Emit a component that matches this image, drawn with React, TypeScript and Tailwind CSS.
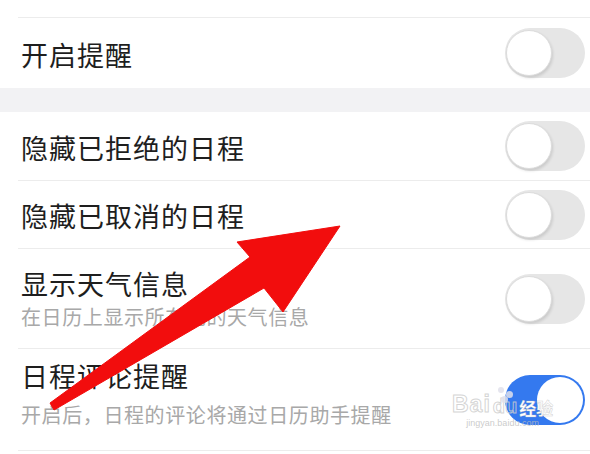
import React from "react";

const font = { fontFamily: '"Noto Sans CJK SC", "Noto Sans", sans-serif' };

function Toggle({ on = false }: { on?: boolean }) {
  if (on) {
    return (
      <div className="relative w-[80px] h-[50px] rounded-full bg-[#3479ef] shrink-0">
        <div className="absolute right-[2px] top-[2px] w-[46px] h-[46px] rounded-full bg-white" />
      </div>
    );
  }
  return (
    <div className="relative w-[80px] h-[50px] rounded-full bg-[#e6e6e6] shrink-0">
      <div className="absolute left-[1px] top-[2px] w-[46px] h-[46px] rounded-full bg-white border border-[#dcdcdc] shadow-[1px_2px_3px_rgba(0,0,0,0.12)]" />
    </div>
  );
}

function Divider() {
  return <div className="h-px bg-[#ececec] ml-[18px]" />;
}

export default function App() {
  return (
    <div className="relative w-[590px] h-[454px] bg-white overflow-hidden" style={font}>
      <div className="h-[17px]" />
      <Divider />
      <div className="h-[70px] flex items-center justify-between pl-[21px] pr-[5px]">
        <span className="text-[27px] leading-[36px] tracking-[1px] text-[#1e1e1e] pt-[3px]">开启提醒</span>
        <Toggle />
      </div>
      <div className="h-[24px] bg-[#f2f2f4]" />
      <div className="h-[68px] flex items-center justify-between pl-[21px] pr-[5px]">
        <span className="text-[27px] leading-[36px] tracking-[1px] text-[#1e1e1e] pt-[3px]">隐藏已拒绝的日程</span>
        <Toggle />
      </div>
      <Divider />
      <div className="h-[67px] flex items-center justify-between pl-[21px] pr-[5px]">
        <span className="text-[27px] leading-[36px] tracking-[1px] text-[#1e1e1e] pt-[3px]">隐藏已取消的日程</span>
        <Toggle />
      </div>
      <Divider />
      <div className="h-[99px] flex items-center justify-between pl-[21px] pr-[5px]">
        <div className="flex flex-col self-start pt-[17px]">
          <span className="text-[27px] leading-[36px] tracking-[1px] text-[#1e1e1e]">显示天气信息</span>
          <span className="text-[20px] leading-[28px] tracking-[0.6px] text-[#a8a8a8] mt-[1px]">在日历上显示所在地的天气信息</span>
        </div>
        <Toggle />
      </div>
      <Divider />
      <div className="h-[101px] flex items-center justify-between pl-[21px] pr-[5px]">
        <div className="flex flex-col self-start pt-[9px]">
          <span className="text-[27px] leading-[36px] tracking-[1px] text-[#1e1e1e]">日程评论提醒</span>
          <span className="text-[20px] leading-[28px] tracking-[0.6px] text-[#a8a8a8] mt-[7px]">开启后，日程的评论将通过日历助手提醒</span>
        </div>
        <Toggle on />
      </div>
      <Divider />

      <svg className="absolute left-0 top-0 pointer-events-none" width="590" height="454" viewBox="0 0 590 454">
        <polygon
          points="340,226 237,242 250,257 50,403 54,410 264,288 283,312"
          fill="#f20d0d"
          stroke="#f20d0d"
          strokeWidth="1"
          strokeLinejoin="round"
        />
      </svg>

      <div className="absolute left-[452px] top-[393px] pointer-events-none flex flex-col items-center">
        <div className="relative flex items-end leading-none">
          <span className="text-[23px] font-bold text-transparent [-webkit-text-stroke:1px_rgba(205,205,205,0.85)] tracking-[1px]" style={{ fontFamily: '"Liberation Sans", sans-serif' }}>Bai</span>
          <span className="text-[20px] font-bold text-transparent [-webkit-text-stroke:1px_rgba(205,205,205,0.85)] ml-[2px]" style={{ fontFamily: '"Liberation Sans", sans-serif' }}>du</span>
          <span className="text-[17px] font-bold text-white ml-[2px] [-webkit-text-stroke:0.5px_rgba(180,180,180,0.6)]">经验</span>
          <span className="absolute left-[46px] top-[-6px] w-[6px] h-[6px] rounded-full bg-[rgba(225,225,235,0.85)]" />
          <span className="absolute left-[54px] top-[-2px] w-[7px] h-[7px] rounded-full bg-[rgba(225,225,235,0.85)]" />
          <span className="absolute left-[49px] top-[3px] w-[7px] h-[7px] rounded-full bg-[rgba(225,225,235,0.85)]" />
        </div>
        <span className="text-[9px] text-[rgba(190,190,190,0.8)] leading-none mt-[3px]" style={{ fontFamily: '"Liberation Sans", sans-serif' }}>jingyan.baidu.com</span>
      </div>
    </div>
  );
}
